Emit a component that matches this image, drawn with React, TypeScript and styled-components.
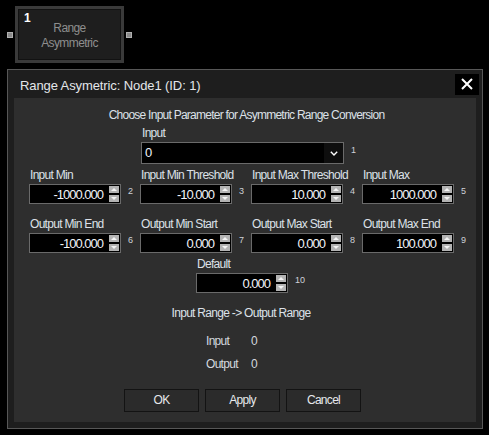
import React from 'react';
import styled, { createGlobalStyle, css } from 'styled-components';

const Global = createGlobalStyle`
  html, body { margin: 0; padding: 0; background: #000; }
  body { font-family: "Liberation Sans", Arial, sans-serif; }
  * { box-sizing: border-box; }
`;

const uiText = css`
  font-family: "Liberation Sans", Arial, sans-serif;
  font-size: 12px;
  line-height: 14px;
  letter-spacing: -0.7px;
  color: #dde1e8;
  white-space: nowrap;
`;

const Page = styled.div`
  width: 489px;
  height: 435px;
  background: #000;
  overflow: hidden;
  display: flex;
  flex-direction: column;
  padding: 6px 0 0 7px;
`;

const NodeRow = styled.div`
  display: flex;
  align-items: center;
  gap: 2px;
`;

const Port = styled.div`
  width: 6px;
  height: 6px;
  background: #8a8a8a;
  border: 1px solid #b0b0b0;
`;

const NodeBox = styled.div`
  position: relative;
  width: 109px;
  height: 57px;
  border: 3px solid #3a3a3a;
  box-shadow: inset 0 0 0 1px #121212;
  background: #1e1e1e;
  display: flex;
  flex-direction: column;
  align-items: center;
  justify-content: center;
`;

const NodeIndex = styled.span`
  position: absolute;
  left: 6px;
  top: 2px;
  font-family: "Liberation Sans", Arial, sans-serif;
  font-weight: bold;
  font-size: 12px;
  line-height: 14px;
  color: #fff;
`;

const NodeTitle = styled.span`
  ${uiText};
  letter-spacing: -0.6px;
  color: #8e8e8e;
  margin-top: 1px;
`;

const Dialog = styled.div`
  margin-top: 6px;
  width: 476px;
  height: 360px;
  border: 1px solid #575757;
  background: #1e1e1e;
  display: flex;
  flex-direction: column;
`;

const TitleBar = styled.div`
  height: 28px;
  display: flex;
  align-items: center;
  justify-content: space-between;
  padding: 0 3px 0 12px;
`;

const TitleText = styled.span`
  font-family: "Liberation Sans", Arial, sans-serif;
  font-size: 13px;
  letter-spacing: -0.1px;
  color: #e4e6ea;
  margin-top: 2px;
`;

const CloseButton = styled.button`
  width: 24px;
  height: 21px;
  border: none;
  padding: 0;
  background: #000;
  display: flex;
  align-items: center;
  justify-content: center;
`;

const Panel = styled.div`
  margin: 0 6px;
  height: 324px;
  background: #2e2e2e;
  display: flex;
  flex-direction: column;
  padding-top: 10px;
`;

const Heading = styled.div`
  ${uiText};
  letter-spacing: -0.75px;
  text-align: center;
  padding-left: 3px;
`;

const SelectBlock = styled.div`
  margin: 4px 0 0 127px;
  display: flex;
  flex-direction: column;
`;

const Label = styled.span`
  ${uiText};
  padding-left: 1px;
  margin-bottom: 2px;
`;

const Row = styled.div`
  display: flex;
  align-items: center;
  gap: 7px;
`;

const SelectBox = styled.div`
  width: 203px;
  height: 22px;
  border: 1px solid #6a6a6a;
  background: #000;
  display: flex;
`;

const SelectValue = styled.span`
  flex: 1;
  ${uiText};
  font-size: 13px;
  line-height: 20px;
  letter-spacing: -0.5px;
  color: #eef2fa;
  padding-left: 3px;
`;

const SelectArrow = styled.span`
  width: 19px;
  background: #0e0e0e;
  display: flex;
  align-items: center;
  justify-content: center;
`;

const Sup = styled.span`
  font-family: "Liberation Sans", Arial, sans-serif;
  font-size: 9px;
  line-height: 10px;
  color: #cfd2d8;
  margin-top: -7px;
`;

const FieldGrid = styled.div`
  margin-top: 4px;
  padding-left: 15px;
  display: grid;
  grid-template-columns: repeat(4, 111px);
  row-gap: 13px;
`;

const Field = styled.div`
  display: flex;
  flex-direction: column;
`;

const SpinBoxFrame = styled.div`
  width: 92px;
  height: 20px;
  border: 1px solid #6a6a6a;
  background: #000;
  display: flex;
  align-items: stretch;
  padding: 1px 1px 1px 0;
`;

const SpinValue = styled.span`
  flex: 1;
  font-family: "Liberation Sans", Arial, sans-serif;
  font-size: 13px;
  line-height: 18px;
  letter-spacing: -1px;
  color: #f2f4f8;
  text-align: right;
  padding-right: 6px;
`;

const SpinButtons = styled.div`
  width: 10px;
  display: flex;
  flex-direction: column;
  justify-content: space-between;
`;

const SpinButton = styled.div<{ $down?: boolean }>`
  height: 7px;
  background: #b3b3b3;
  display: flex;
  align-items: center;
  justify-content: center;
  &::after {
    content: '';
    width: 0;
    height: 0;
    border-left: 3px solid transparent;
    border-right: 3px solid transparent;
    ${(p) =>
      p.$down
        ? css`border-top: 3px solid #f4f4f4;`
        : css`border-bottom: 3px solid #f4f4f4;`}
  }
`;

const DefaultBlock = styled.div`
  margin: 4px 0 0 182px;
  display: flex;
  flex-direction: column;
`;

const RangeTitle = styled.div`
  ${uiText};
  text-align: center;
  margin-top: 13px;
  padding-right: 8px;
`;

const Readout = styled.div`
  margin: 14px 0 0 192px;
  display: grid;
  grid-template-columns: 45px auto;
  row-gap: 9px;
`;

const ReadoutText = styled.span`
  ${uiText};
  color: #d4d8df;
`;

const ButtonBar = styled.div`
  margin-top: 18px;
  padding-left: 110px;
  display: flex;
  gap: 6px;
`;

const DialogButton = styled.button`
  width: 75px;
  height: 23px;
  border: 1px solid #131313;
  background: #2b2b2b;
  ${uiText};
  line-height: 21px;
  color: #e6e8ec;
  padding: 0;
`;

function SpinBox({ value }: { value: string }) {
  return (
    <SpinBoxFrame>
      <SpinValue>{value}</SpinValue>
      <SpinButtons>
        <SpinButton />
        <SpinButton $down />
      </SpinButtons>
    </SpinBoxFrame>
  );
}

type FieldDef = { label: string; value: string; sup: string };

const fields: FieldDef[] = [
  { label: 'Input Min', value: '-1000.000', sup: '2' },
  { label: 'Input Min Threshold', value: '-10.000', sup: '3' },
  { label: 'Input Max Threshold', value: '10.000', sup: '4' },
  { label: 'Input Max', value: '1000.000', sup: '5' },
  { label: 'Output Min End', value: '-100.000', sup: '6' },
  { label: 'Output Min Start', value: '0.000', sup: '7' },
  { label: 'Output Max Start', value: '0.000', sup: '8' },
  { label: 'Output Max End', value: '100.000', sup: '9' },
];

export default function App() {
  return (
    <>
      <Global />
      <Page>
        <NodeRow>
          <Port />
          <NodeBox>
            <NodeIndex>1</NodeIndex>
            <NodeTitle>Range</NodeTitle>
            <NodeTitle>Asymmetric</NodeTitle>
          </NodeBox>
          <Port />
        </NodeRow>
        <Dialog>
          <TitleBar>
            <TitleText>Range Asymetric: Node1 (ID: 1)</TitleText>
            <CloseButton aria-label="close">
              <svg width="12" height="12" viewBox="0 0 12 12">
                <path d="M1 1 L11 11 M11 1 L1 11" stroke="#fff" strokeWidth="2" />
              </svg>
            </CloseButton>
          </TitleBar>
          <Panel>
            <Heading>Choose Input Parameter for Asymmetric Range Conversion</Heading>
            <SelectBlock>
              <Label>Input</Label>
              <Row>
                <SelectBox>
                  <SelectValue>0</SelectValue>
                  <SelectArrow>
                    <svg width="8" height="5" viewBox="0 0 8 5">
                      <path d="M0.8 0.8 L4 4 L7.2 0.8" stroke="#fff" strokeWidth="1.4" fill="none" />
                    </svg>
                  </SelectArrow>
                </SelectBox>
                <Sup>1</Sup>
              </Row>
            </SelectBlock>
            <FieldGrid>
              {fields.map((f) => (
                <Field key={f.sup}>
                  <Label>{f.label}</Label>
                  <Row>
                    <SpinBox value={f.value} />
                    <Sup>{f.sup}</Sup>
                  </Row>
                </Field>
              ))}
            </FieldGrid>
            <DefaultBlock>
              <Label>Default</Label>
              <Row>
                <SpinBox value="0.000" />
                <Sup>10</Sup>
              </Row>
            </DefaultBlock>
            <RangeTitle>Input Range -&gt; Output Range</RangeTitle>
            <Readout>
              <ReadoutText>Input</ReadoutText>
              <ReadoutText>0</ReadoutText>
              <ReadoutText>Output</ReadoutText>
              <ReadoutText>0</ReadoutText>
            </Readout>
            <ButtonBar>
              <DialogButton>OK</DialogButton>
              <DialogButton>Apply</DialogButton>
              <DialogButton>Cancel</DialogButton>
            </ButtonBar>
          </Panel>
        </Dialog>
      </Page>
    </>
  );
}
